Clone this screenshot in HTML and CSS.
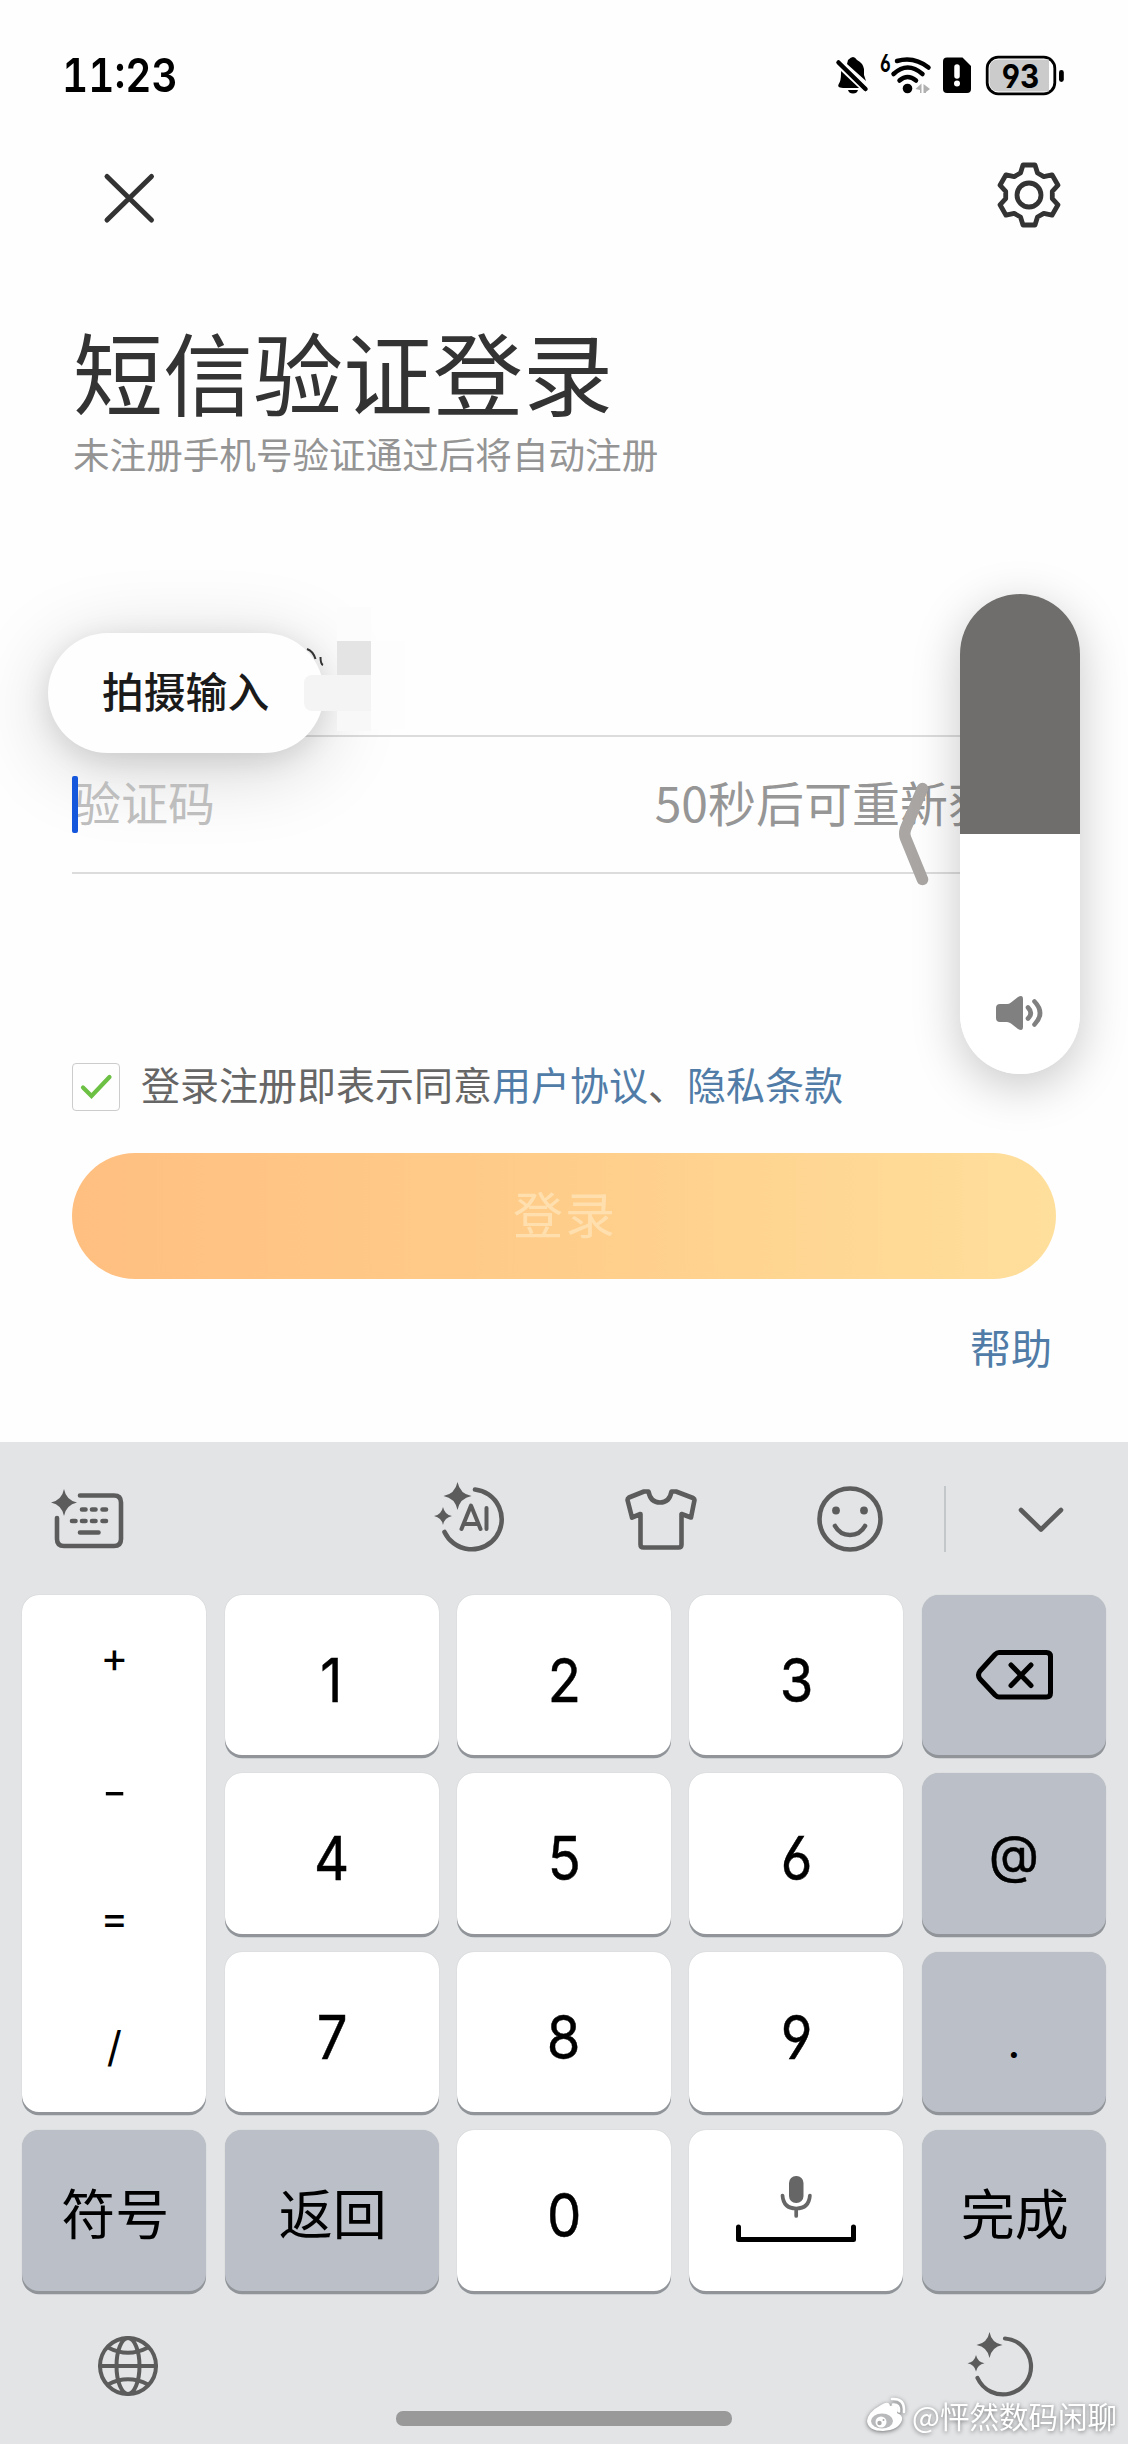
FILE: index.html
```html
<!DOCTYPE html>
<html lang="zh-CN">
<head>
<meta charset="utf-8">
<title>短信验证登录</title>
<link rel="stylesheet" href="styles.css">
</head>
<body>
<div class="screen">
  <main class="app">
    <div class="status">
      <span class="time">11:23</span>
      <svg class="status-icons" viewBox="830 50 240 50" width="240" height="50">
        <!-- muted bell -->
        <path d="M843 88l-3-.500q-3-1-1-4q2-3 2-10q0-6 3-8l20 18q3 3 0 4.500z M848 60q3-3 5-3q2 0 4 3q6 3 7 9v6l2 6-19-17z"/>
        <path d="M848 90h10q-1 3.500-5 3.500t-5-3.500z"/>
        <path d="M838.500 63L865.500 88.500" fill="none" stroke="#fff" stroke-width="8"/>
        <path d="M838.500 62.500L865.500 89" fill="none" stroke="#000" stroke-width="4.500" stroke-linecap="round"/>
        <!-- wifi -->
        <text x="880" y="72" class="wifi-gen">6</text>
        <g fill="none" stroke="#000" stroke-width="4.500" stroke-linecap="round">
          <path d="M897 61q17-5 31.500 6.500"/><path d="M893.500 74q14-13 29 0"/><path d="M899.500 80.500q8-7 16.500 0"/>
        </g>
        <circle cx="907.500" cy="88.500" r="4.800"/>
        <path d="M915.500 89l6-5.500v9.500h-1.500v-3zM923.500 84l6.500 5-4 3v1h-2.500z" fill="#b0b0b0"/>
        <!-- sim -->
        <path d="M947 57.500h15.500l8.500 8.500v23q0 4-4 4h-20q-4 0-4-4v-27.500q0-4 4-4z"/>
        <path d="M957 67v9" stroke="#fff" stroke-width="5.500" stroke-linecap="round"/><circle cx="957" cy="83.500" r="3" fill="#fff"/>
        <!-- battery -->
        <rect x="987.200" y="57.200" width="67.600" height="36.600" rx="11" fill="#fff" stroke="#000" stroke-width="2.800"/>
        <path d="M999 59.500h50v32h-50q-9.500 0-9.500-9v-14q0-9 9.500-9z" fill="#cbcbcb"/>
        <rect x="1059" y="70" width="4.800" height="12" rx="2.400"/>
        <text x="1020.500" y="88.500" class="battery-level">93</text>
      </svg>
    </div>
    <nav class="nav">
      <svg viewBox="100 170 58 56" width="58" height="56"><path d="M107 176.500l44.500 43.500M151.500 176.500l-44.500 43.500" fill="none" stroke="#333" stroke-width="5" stroke-linecap="round"/></svg>
      <svg viewBox="-34 -34 68 68" width="68" height="68" fill="none" stroke="#333" stroke-width="4.800" stroke-linejoin="round">
        <circle r="12"/>
        <path d="M-8.500-22L-6-30H6L8.500-22L14.800-18.400L23-20.200L29-9.800L23.300-3.600V3.600L29 9.800L23 20.200L14.800 18.400L8.500 22L6 30H-6L-8.500 22L-14.800 18.400L-23 20.200L-29 9.800L-23.300 3.600V-3.600L-29-9.800L-23-20.200L-14.800-18.400Z"/>
      </svg>
    </nav>
    <h1 class="title">短信验证登录</h1>
    <p class="subtitle">未注册手机号验证通过后将自动注册</p>
    <div class="field phone"></div>
    <div class="field code">
      <i class="caret"></i><span class="placeholder">验证码</span>
      <span class="countdown">50秒后可重新获取</span>
    </div>
    <div class="terms">
      <span class="checkbox"><svg viewBox="73 1064 46 46" width="46" height="46"><path d="M83 1087.500l8.500 8.500L109.500 1077" fill="none" stroke="#6cc044" stroke-width="4.200" stroke-linecap="round"/></svg></span>
      <span class="terms-text">登录注册即表示同意<a>用户协议</a>、<a>隐私条款</a></span>
    </div>
    <button class="login">登录</button>
    <a class="help">帮助</a>

    <div class="mosaic">
      <i class="m1"></i><i class="m2"></i><i class="m4"></i><i class="m5"></i>
    </div>
    <div class="scan">拍摄输入</div>
    <i class="m3"></i>
    <svg class="trace" viewBox="304 646 20 22" width="20" height="22"><path d="M307 649q6 2 8.500 10M320.500 657q0 7 2.500 8" fill="none" stroke="#333" stroke-width="2"/></svg>
    <svg class="back-hint" viewBox="898 780 32 108" width="32" height="108"><path d="M922.500 788.500L905.500 829Q904 834 905.500 838L922.500 879.500" fill="none" stroke="#a9a6a4" stroke-width="11.500" stroke-linecap="round"/></svg>
    <div class="volume">
      <div class="volume-off"></div>
      <svg viewBox="995 992 52 42" width="52" height="42">
        <path d="M1001 1004h7q2 0 4-1.500l7-5.500q5-2.500 5 2v28q0 4.500-5 2l-7-5.500q-2-1.500-4-1.500h-7q-4 0-4-4v-10q0-4 4-4z" fill="#808080"/>
        <path d="M1029 1007.500q5.500 5.500 0 11M1035.500 1001.500q11 11.500 0 23" fill="none" stroke="#808080" stroke-width="4.600" stroke-linecap="round"/>
      </svg>
    </div>
  </main>

  <section class="keyboard">
    <div class="toolbar">
      <svg viewBox="47 1478 80 80" width="80" height="80" class="line">
        <path class="fill" d="M64 1489Q66 1500 77 1502.500Q66 1505 64 1516Q62 1505 51 1502.500Q62 1500 64 1489Z"/>
        <path d="M80 1495.500h34q7 0 7 7v36.500q0 7-7 7H64q-7 0-7-7V1518"/>
        <path d="M82 1509.500h3.500M92 1509.500h3.500M102.500 1509.500h3.500M72 1521h3.500M82 1521h3.500M92 1521h3.500M102.500 1521h3.500M80 1532.500h18.500"/>
      </svg>
      <svg viewBox="430 1478 80 80" width="80" height="80" class="line">
        <path class="fill" d="M457.500 1482Q460 1494 471.500 1496Q460 1498 457.500 1510Q455 1498 443.500 1496Q455 1494 457.500 1482Z"/>
        <path class="fill" d="M443 1507Q444.500 1514.500 452 1516Q444.500 1517.500 443 1525Q441.500 1517.500 434 1516Q441.500 1514.500 443 1507Z"/>
        <path d="M475 1489.500A30 30 0 1 1 444.500 1532"/>
        <path stroke-width="4" d="M461.500 1529l9.500-23.500 9.500 23.500M464.500 1524h13M486.500 1508v21"/>
      </svg>
      <svg viewBox="620 1478 80 80" width="80" height="80" class="line">
        <path d="M644 1491.500h4.500q2 11 11.500 11t11.500-11h4.500l17 6.500q1.500 1 1.500 2l-3.500 17.500-9.500-3.500v30.500q0 3-3 3h-35q-3 0-3-3v-30.500l-8.500 3.500-4.500-17.500q0-1.500 1.500-2.500z"/>
      </svg>
      <svg viewBox="810 1478 80 80" width="80" height="80" class="line">
        <circle cx="850" cy="1519" r="30.500"/><circle class="fill" cx="836" cy="1510.500" r="3.900"/><circle class="fill" cx="864" cy="1510.500" r="3.900"/>
        <path d="M835 1526q5 9 15 9t15-9"/>
      </svg>
      <i class="divider"></i>
      <svg viewBox="1001 1478 80 80" width="80" height="80" class="line"><path d="M1021 1510l20 19.500 20-19.500"/></svg>
    </div>

    <div class="keys">
      <div class="key symbols"><span class="plus">+</span><span class="minus">-</span><span>=</span><span>/</span></div>
      <div class="key num"><b>1</b></div><div class="key num"><b>2</b></div><div class="key num"><b>3</b></div>
      <div class="key gray"><svg viewBox="972 1648 82 56" width="82" height="56" fill="none" stroke="#000" stroke-width="5" stroke-linecap="round" stroke-linejoin="round"><path d="M998 1653.500h47.500q4 0 4 4v36.500q0 4-4 4H998q-2 0-4-2l-15-16q-3-4 0-8l15-16.500q2-2 4-2z"/><path d="M1010 1666l20 20.500M1030 1666l-20 20.500"/></svg></div>
      <div class="key num"><b>4</b></div><div class="key num"><b>5</b></div><div class="key num"><b>6</b></div>
      <div class="key gray at">@</div>
      <div class="key num"><b>7</b></div><div class="key num"><b>8</b></div><div class="key num"><b>9</b></div>
      <div class="key gray dot">.</div>
      <div class="key gray word">符号</div>
      <div class="key gray word">返回</div>
      <div class="key num"><b>0</b></div>
      <div class="key"><svg viewBox="732 2171 128 78" width="128" height="78">
        <rect x="789" y="2176" width="14.500" height="27" rx="7" fill="#666"/>
        <path d="M782.500 2195.500q1 13 13.700 13t13.700-13M796.200 2209v7" fill="none" stroke="#666" stroke-width="3.700" stroke-linecap="round"/>
        <path d="M738.500 2227v12.500h115V2227" fill="none" stroke="#000" stroke-width="5" stroke-linecap="round" stroke-linejoin="round"/>
      </svg></div>
      <div class="key gray word">完成</div>
    </div>

    <div class="bottom">
      <svg viewBox="96 2328 72 72" width="72" height="72" class="line globe">
        <circle cx="128" cy="2366" r="28"/><ellipse cx="128" cy="2366" rx="11.500" ry="28"/>
        <path d="M100 2366h56M108 2347.500q20 10.500 40 0M108 2384.500q20-10.500 40 0"/>
      </svg>
      <svg viewBox="964 2328 72 72" width="72" height="72" class="line">
        <path class="fill" d="M989.500 2332Q991.500 2343 1002.500 2345Q991.500 2347 989.500 2358Q987.500 2347 976.500 2345Q987.500 2343 989.500 2332Z"/>
        <path class="fill" d="M976 2355Q977.500 2362 984.500 2363.300Q977.500 2364.600 976 2371.500Q974.500 2364.600 967.500 2363.300Q974.500 2362 976 2355Z"/>
        <path d="M1005 2338.500A28 28 0 1 1 977.500 2378" stroke-width="4.200"/>
      </svg>
    </div>
    <div class="home-bar"></div>
    <div class="watermark">
      <svg viewBox="0 0 42 36" width="42" height="36">
        <path d="M15 8q8-5 9 1q8-3 8 3q0 3-1 4q6 2 5 7q-3 10-19 11Q2 34 1 24Q2 15 15 8Z" fill="#fff"/>
        <ellipse cx="16" cy="24" rx="11" ry="7.500" fill="#b9babc"/><circle cx="15" cy="25" r="5.500" fill="#fff"/><circle cx="13.500" cy="26" r="2.200" fill="#aaa"/><circle cx="17.500" cy="23" r="1" fill="#aaa"/>
        <path d="M26 2q13-1 12 13M27 7.500q7-.500 6 7" fill="none" stroke="#fff" stroke-width="2.600" stroke-linecap="round"/>
      </svg>
      <span>@怦然数码闲聊</span>
    </div>
  </section>
</div>
</body>
</html>
```
FILE: styles.css
```css
* { box-sizing: border-box; }
body { margin: 0; background: #fefefe; font-family: "Noto Sans CJK SC", sans-serif; }
svg { display: block; flex: none; }
.screen { width: 1128px; height: 2444px; position: relative; overflow: hidden; }
.app { height: 1442px; padding: 0 72px; position: relative; overflow: hidden; }

.status { height: 150px; margin: 0 -10px; padding-top: 50px; display: flex; justify-content: space-between; align-items: flex-start; }
.time { font: 600 46px/50px Inter, sans-serif; font-feature-settings: "tnum"; color: #000; transform: scaleX(.88); transform-origin: left; }
.status-icons { margin-right: -4px; }
.wifi-gen { font: 700 25px Inter, sans-serif; font-feature-settings: "cv03"; transform-box: fill-box; transform: scaleX(.7); }
.battery-level { font: 700 33px Inter, sans-serif; font-feature-settings: "cv04"; text-anchor: middle; transform-box: fill-box; transform-origin: center; transform: scaleX(.9); }

.nav { height: 159.5px; padding: 11px 0 0 28px; margin-right: -7px; display: flex; justify-content: space-between; align-items: flex-start; }
.nav svg:first-child { margin-top: 9px; }
.title { margin: 0 0 0 1px; font-size: 90px; line-height: 120px; font-weight: 400; color: #333; }
.subtitle { margin: 0 0 0 1px; font-size: 36.600px; line-height: 48px; color: #949494; }

.field { border-bottom: 2px solid #dcdcdc; }
.phone { height: 259.500px; }
.code { height: 137px; padding-bottom: 8px; display: flex; align-items: center; position: relative; z-index: 1; }
.caret { width: 6px; height: 57px; margin: 7px -4px 0 0; border-radius: 2px; background: #1557dc; z-index: 1; }
.placeholder { font-size: 47px; color: #bebebe; }
.countdown { margin: 0 12px 0 auto; font-size: 48px; color: #969696; }

.terms { margin-top: 189px; height: 48px; display: flex; align-items: center; }
.checkbox { width: 48px; height: 48px; border: 1.500px solid #ccc; border-radius: 4px; }
.terms-text { margin: -8px 0 0 21px; font-size: 39px; line-height: 48px; color: #666; }
.terms a, .help { color: #507ca7; }
.login { display: block; width: 984px; height: 126px; margin: 42px 0 37px; padding: 0 0 9px 2px; border: 0; border-radius: 63px; background: linear-gradient(90deg, #ffbf80, #ffcd8a 50%, #ffdf9c); font: 400 50px "Noto Sans CJK SC", sans-serif; letter-spacing: 2px; color: #ffdfae; }
.help { display: block; text-align: right; padding-right: 4px; font-size: 41px; line-height: 60px; }

.scan { position: absolute; left: 48px; top: 633px; width: 276px; height: 120px; border-radius: 60px; background: #fefefe; box-shadow: 0 14px 80px rgba(0,0,0,.18), 0 6px 28px rgba(0,0,0,.1); padding-left: 54px; font-size: 41.800px; font-weight: 500; line-height: 114px; color: #1a1a1a; }
.mosaic i, .m3 { position: absolute; left: 337px; width: 34px; }
.mosaic .m1 { top: 607px; height: 34px; background: #fcfcfc; z-index: 1; }
.mosaic .m2 { top: 641px; height: 34px; background: #e4e4e4; z-index: 1; }
.mosaic .m4 { top: 711px; height: 20px; background: #f8f8f8; z-index: 1; }
.mosaic .m5 { left: 371px; top: 641px; height: 88px; background: #fdfdfd; z-index: 1; }
.m3 { left: 304px; top: 675px; width: 67px; height: 36px; border-radius: 8px 0 0 8px; background: #f4f4f4; z-index: 1; }
.trace { position: absolute; left: 304px; top: 646px; }
.back-hint { position: absolute; left: 898px; top: 780px; z-index: 2; }
.volume { position: absolute; left: 960px; top: 594px; width: 120px; height: 480px; border-radius: 60px; z-index: 2; background: linear-gradient(#6f6e6c 240px, #fff 240px); box-shadow: 0 12px 48px rgba(0,0,0,.22); display: flex; flex-direction: column; align-items: center; }
.volume-off { height: 398px; }

.keyboard { height: 1002px; background: #e2e4e6; position: relative; }
.toolbar { height: 152.600px; padding: 36px 0 0 47px; display: grid; grid-template-columns: 383px 190px 190px 134px 57px 80px; }
.line { fill: none; stroke: #5c5c5c; stroke-width: 4.600px; stroke-linecap: round; stroke-linejoin: round; }
.line .fill { fill: #5c5c5c; stroke: none; }
.globe { stroke-width: 4px; }
.divider { width: 1.500px; height: 66px; margin-top: 8px; background: #c4c7c9; }

.keys { padding: 0 22.300px; display: grid; grid-template-columns: 184px repeat(3, 214px) 184px; grid-auto-rows: 160.700px; column-gap: 18.400px; row-gap: 17.800px; }
.key { border-radius: 17px; background: #fff; box-shadow: 0 3.300px 0 #919599, 0 0 1px rgba(0,0,0,.2); display: flex; align-items: center; justify-content: center; color: #000; font: 400 42px Inter, sans-serif; }
.symbols { grid-row: span 3; display: grid; grid-template-rows: repeat(4, 129px); align-content: center; justify-items: center; align-items: center; }
.plus { margin-top: -6px; }
.minus { margin-top: 6px; transform: scaleX(1.3); }
.gray { background: #bbc0c8; }
.num b { font: 400 60.500px Inter, sans-serif; font-feature-settings: "cv03", "cv04"; transform: scaleX(.9); padding-top: 10px; -webkit-text-stroke: .5px #000; }
.at { font-size: 52px; padding-top: 2px; -webkit-text-stroke: .5px #000; }
.dot { font-size: 46px; padding-top: 18px; }
.word { font: 400 54px "Noto Sans CJK SC", sans-serif; padding: 2px 0 0 2px; }
.bottom { padding: 37px 92px 0 96px; display: flex; justify-content: space-between; }
.home-bar { position: absolute; left: 396px; top: 969px; width: 336px; height: 15px; border-radius: 7px; background: #999; }
.watermark { position: absolute; left: 866px; top: 955px; display: flex; gap: 4px; align-items: center; font-size: 29.500px; line-height: 36px; color: #fff; white-space: nowrap; filter: drop-shadow(0 1px 2px rgba(0,0,0,.5)); }
```
